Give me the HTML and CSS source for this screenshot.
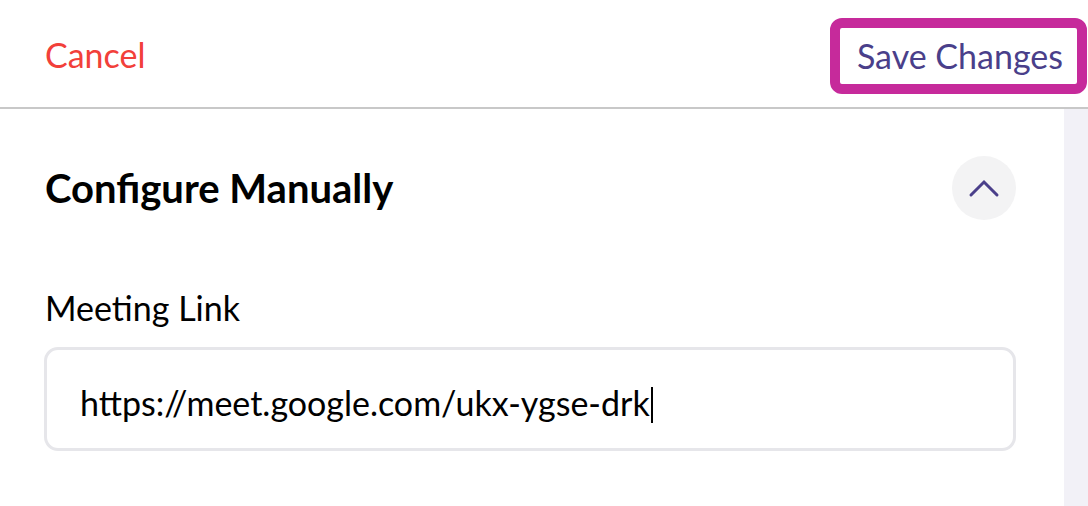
FILE: index.html
```html
<!DOCTYPE html>
<html>
<head>
<meta charset="utf-8">
<link rel="stylesheet" href="styles.css">
</head>
<body>
<header class="topbar">
  <button class="cancel">Cancel</button>
  <button class="save">Save Changes</button>
</header>
<div class="main">
  <div class="content">
    <div class="section-head">
      <h2 class="title">Configure Manually</h2>
      <button class="collapse" aria-label="Collapse">
        <svg width="64" height="64" viewBox="0 0 64 64"><path d="M19 39 L32 26 L45 39" fill="none" stroke="#4a3f8a" stroke-width="3" stroke-linecap="round" stroke-linejoin="miter"/></svg>
      </button>
    </div>
    <label class="label">Meeting Link</label>
    <div class="input"><span class="value">https://meet.google.com/ukx-ygse-drk</span><span class="caret"></span></div>
  </div>
  <div class="scrolltrack"></div>
</div>
</body>
</html>
```
FILE: styles.css
```css
html, body {
  margin: 0;
  padding: 0;
  background: #ffffff;
  font-family: Lato, "Open Sans", sans-serif;
  height: 100%;
  overflow: hidden;
}
button {
  font-family: inherit;
  background: none;
  border: none;
  padding: 0;
  cursor: pointer;
}
.topbar {
  height: 107px;
  display: flex;
  align-items: center;
  justify-content: space-between;
  padding: 0 1px 0 45px;
  border-bottom: 2px solid #c8c8c8;
  box-sizing: content-box;
}
.cancel {
  color: #f2403a;
  font-size: 34px;
  line-height: 40px;
  margin-top: 2px;
}
.save {
  color: #4a3f8a;
  font-size: 34px;
  line-height: 40px;
  border: 10px solid #c62a9b;
  border-radius: 12px;
  height: 76px;
  box-sizing: border-box;
  padding: 0 14px 0 17px;
  margin-top: 4px;
}
.main {
  display: flex;
  height: 397px;
}
.content {
  flex: 1;
  padding: 47px 48px 0 44px;
}
.scrolltrack {
  width: 24px;
  background: #f2f1f7;
}
.section-head {
  display: flex;
  align-items: center;
  justify-content: space-between;
  height: 64px;
}
.title {
  margin: 0;
  font-size: 40px;
  font-weight: 700;
  color: #000000;
  padding-left: 1px;
}
.collapse {
  width: 64px;
  height: 64px;
  border-radius: 50%;
  background: #f3f3f4;
  display: flex;
  align-items: center;
  justify-content: center;
}
.collapse svg { display: block; }
.label {
  display: block;
  margin-top: 68px;
  padding-left: 1px;
  font-size: 34px;
  line-height: 40px;
  color: #000000;
}
.input {
  margin-top: 19px;
  height: 104px;
  box-sizing: border-box;
  border: 3px solid #e6e6ea;
  border-radius: 14px;
  display: flex;
  align-items: center;
  padding: 6px 0 0 33px;
  font-size: 34px;
  color: #000000;
}
.caret {
  display: inline-block;
  width: 2px;
  height: 36px;
  background: #000000;
  margin-left: 1px;
  margin-top: 6px;
}
```
